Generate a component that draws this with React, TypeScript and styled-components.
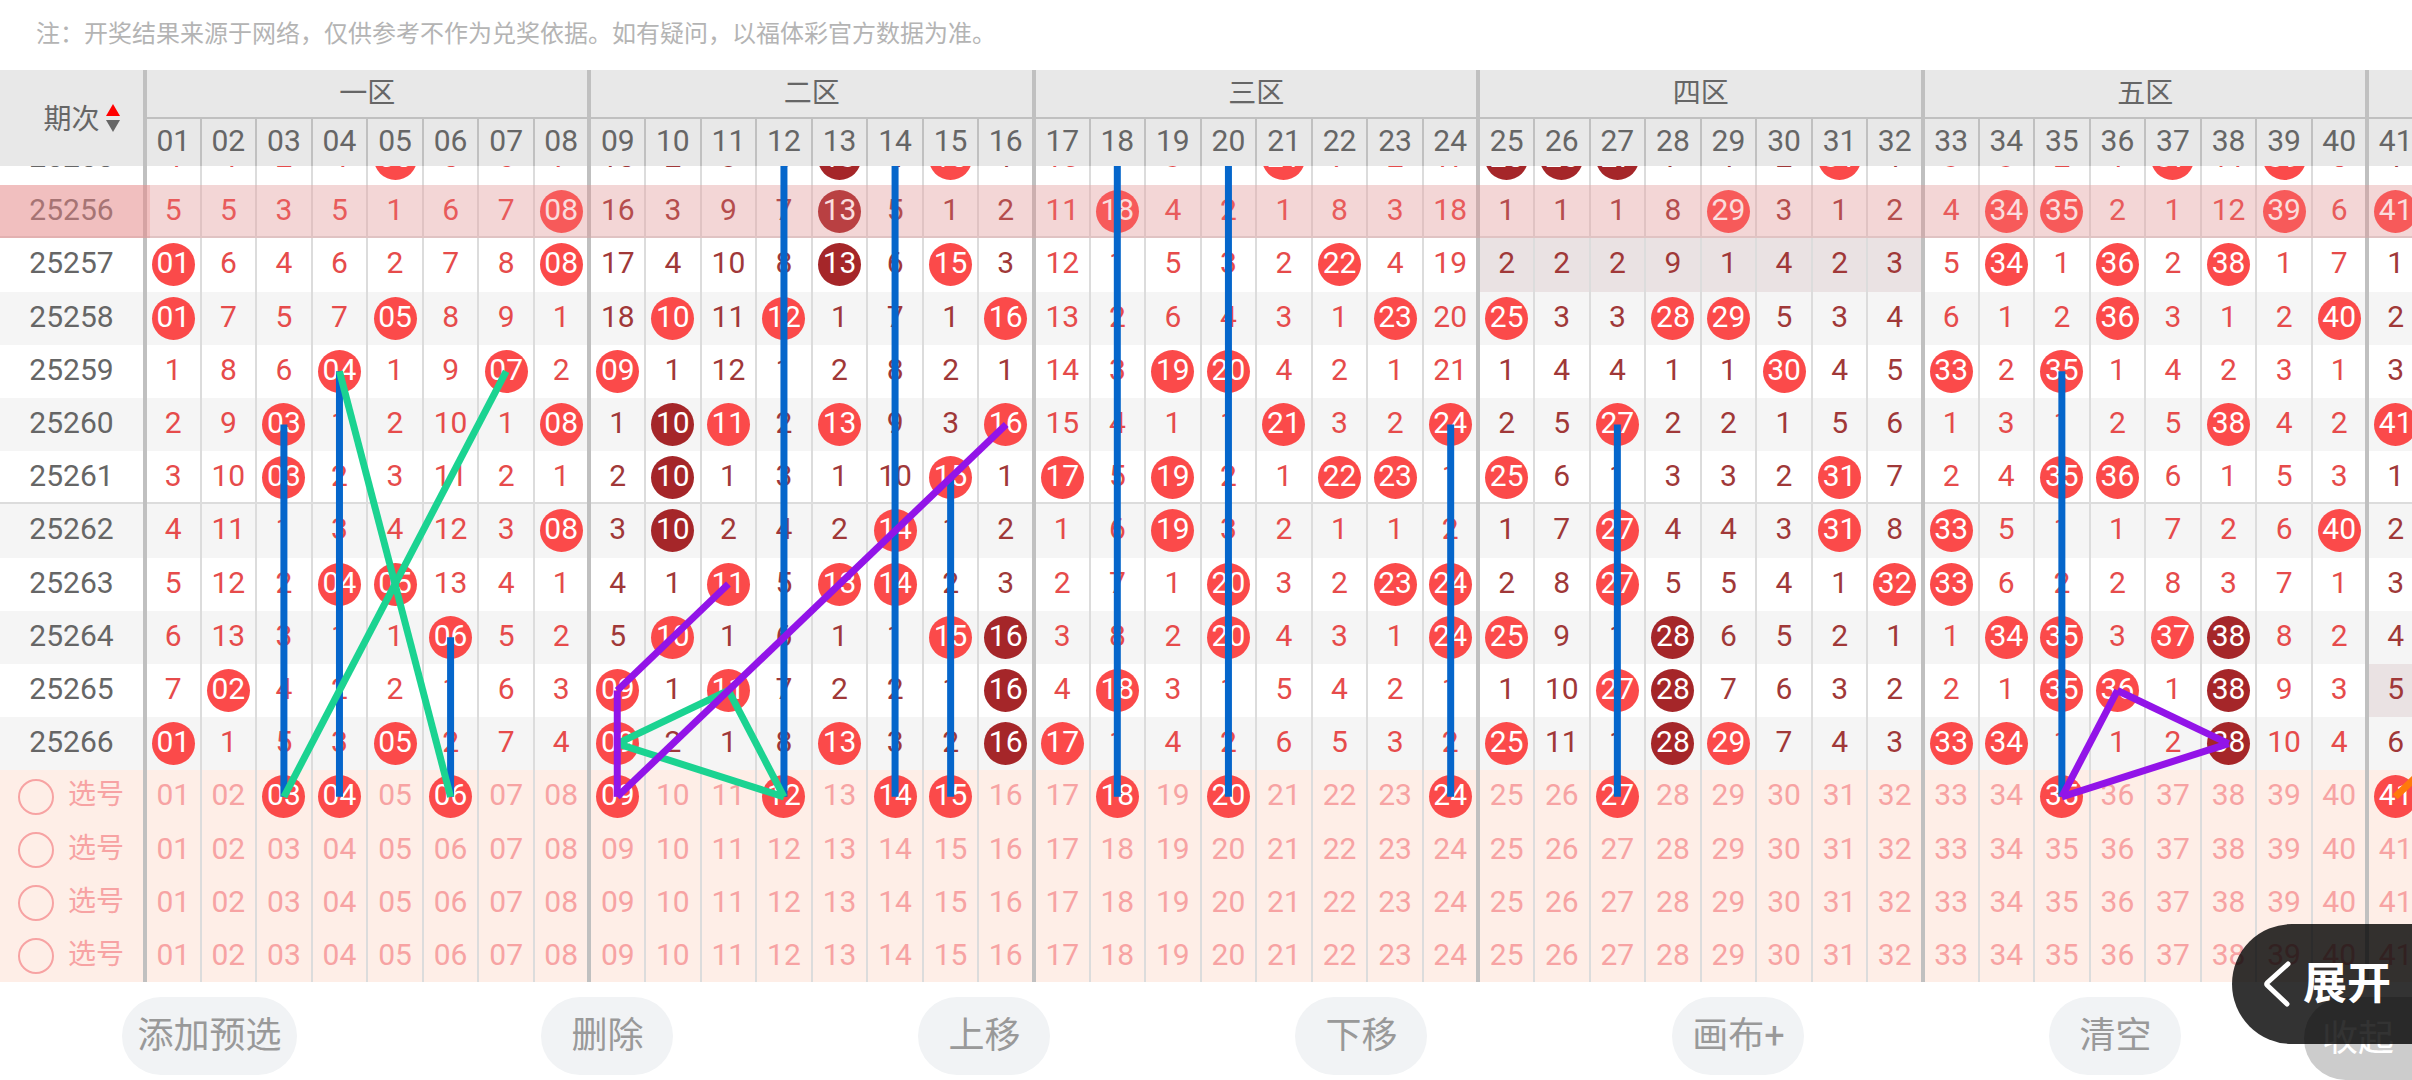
import React, { useState } from "react";
import styled, { createGlobalStyle, css } from "styled-components";

const COLUMNS = 41;
const ZONE_SIZE = 8;
const ZONES = ["一区", "二区", "三区", "四区", "五区", ""];
const NUMBERS = Array.from({ length: COLUMNS }, (_, i) => i + 1);

/* "*" is a drawn number, "#" a number drawn in consecutive issues, anything else the gap count */
const ISSUES: { id: string; cells: string }[] = [
  { id: "25255", cells: "4 4 2 4 * 5 6 7 15 2 8 6 # 4 * 1 10 1 3 1 * 7 2 17 # # # 7 1 2 * 1 3 3 2 1 * 11 * 5 1" },
  { id: "25256", cells: "5 5 3 5 1 6 7 * 16 3 9 7 # 5 1 2 11 * 4 2 1 8 3 18 1 1 1 8 * 3 1 2 4 * * 2 1 12 * 6 *" },
  { id: "25257", cells: "* 6 4 6 2 7 8 * 17 4 10 8 # 6 * 3 12 1 5 3 2 * 4 19 2 2 2 9 1 4 2 3 5 * 1 * 2 * 1 7 1" },
  { id: "25258", cells: "* 7 5 7 * 8 9 1 18 * 11 * 1 7 1 * 13 2 6 4 3 1 * 20 * 3 3 * * 5 3 4 6 1 2 * 3 1 2 * 2" },
  { id: "25259", cells: "1 8 6 * 1 9 * 2 * 1 12 1 2 8 2 1 14 3 * * 4 2 1 21 1 4 4 1 1 * 4 5 * 2 * 1 4 2 3 1 3" },
  { id: "25260", cells: "2 9 * 1 2 10 1 * 1 # * 2 * 9 3 * 15 4 1 1 * 3 2 * 2 5 * 2 2 1 5 6 1 3 1 2 5 * 4 2 *" },
  { id: "25261", cells: "3 10 * 2 3 11 2 1 2 # 1 3 1 10 * 1 * 5 * 2 1 * * 1 * 6 1 3 3 2 * 7 2 4 * * 6 1 5 3 1" },
  { id: "25262", cells: "4 11 1 3 4 12 3 * 3 # 2 4 2 * 1 2 1 6 * 3 2 1 1 2 1 7 * 4 4 3 * 8 * 5 1 1 7 2 6 * 2" },
  { id: "25263", cells: "5 12 2 * * 13 4 1 4 1 * 5 * * 2 3 2 7 1 * 3 2 * * 2 8 * 5 5 4 1 * * 6 2 2 8 3 7 1 3" },
  { id: "25264", cells: "6 13 3 1 1 * 5 2 5 * 1 6 1 1 * # 3 8 2 * 4 3 1 * * 9 1 # 6 5 2 1 1 * * 3 * # 8 2 4" },
  { id: "25265", cells: "7 * 4 2 2 1 6 3 * 1 * 7 2 2 1 # 4 * 3 1 5 4 2 1 1 10 * # 7 6 3 2 2 1 * * 1 # 9 3 5" },
  { id: "25266", cells: "* 1 5 3 * 2 7 4 * 2 1 8 * 3 2 # * 1 4 2 6 5 3 2 * 11 1 # * 7 4 3 * * 1 1 2 # 10 4 6" },
];

const MARKED_ISSUE = "25256";
const DIVIDED_AFTER = ["25256", "25261"];
/* zones without a single drawn number in that issue */
const EMPTY_ZONES: Record<string, number> = { "25257": 3, "25265": 5 };

const FIRST_PICKS = [3, 4, 6, 9, 12, 14, 15, 18, 20, 24, 27, 35, 41];

/* [from number, from row, to number, to row] */
type Segment = [number, number, number, number];
const STROKES: { color: string; segments: Segment[] }[] = [
  {
    color: "#0566cb",
    segments: [
      [3, 5, 3, 12],
      [4, 4, 4, 12],
      [6, 9, 6, 12],
      [12, 0, 12, 12],
      [14, 0, 14, 12],
      [15, 6, 15, 12],
      [18, 0, 18, 12],
      [20, 0, 20, 12],
      [24, 5, 24, 12],
      [27, 5, 27, 12],
      [35, 4, 35, 12],
    ],
  },
  {
    color: "#1bd391",
    segments: [
      [7, 4, 3, 12],
      [4, 4, 6, 12],
      [11, 10, 9, 11],
      [9, 11, 12, 12],
      [12, 12, 11, 10],
    ],
  },
  {
    color: "#9214e8",
    segments: [
      [16, 5, 9, 12],
      [11, 8, 9, 10],
      [9, 10, 9, 12],
      [36, 10, 38, 11],
      [38, 11, 35, 12],
      [35, 12, 36, 10],
    ],
  },
  { color: "#ff7a0a", segments: [[41, 12, 42, 11]] },
];

const pad = (n: number) => String(n).padStart(2, "0");
const zoneOf = (n: number) => Math.floor((n - 1) / ZONE_SIZE);

const GlobalStyle = createGlobalStyle`
  *, *::before, *::after { box-sizing: border-box; }
  body {
    margin: 0;
    background: #fff;
    font-family: Roboto, "Noto Sans CJK SC", sans-serif;
  }
  button { font-family: inherit; border: 0; cursor: pointer; }
`;

const Page = styled.main`
  position: relative;
  display: flex;
  flex-direction: column;
  height: 100vh;
  overflow: hidden;
`;

const Note = styled.p`
  flex: none;
  margin: 0;
  padding: 0 36px;
  font-family: "Noto Sans CJK SC", sans-serif;
  font-size: 24px;
  line-height: 64px;
  height: 70px;
  color: #b4b4b4;
`;

const Chart = styled.section`
  position: relative;
  flex: 1;
  min-height: 0;
  overflow: hidden;
`;

const Table = styled.table`
  display: block;
  width: calc(100% + 11px);
`;

const columns = css`
  display: grid;
  grid-template-columns: 145px repeat(${COLUMNS}, minmax(0, 1fr));
`;

const Head = styled.thead`
  ${columns}
  grid-template-rows: 49px 47px;
  position: relative;
  z-index: 2;
  background: #e8e8e8;
  color: #666;
`;

const HeadRow = styled.tr`
  display: contents;
`;

const Corner = styled.th`
  grid-row: 1 / 3;
  display: flex;
  align-items: center;
  justify-content: center;
  gap: 6px;
  padding: 0 0 0 20px;
  border-right: 2px solid #c0c0c0;
  font-size: 28px;
  font-weight: 400;
`;

const CornerText = styled.span`
  padding-bottom: 3px;
`;

const SortIcon = styled.svg`
  width: 14px;
  height: 28px;
`;

const ZoneCell = styled.th<{ $span: number }>`
  grid-column: span ${(p) => p.$span};
  display: flex;
  align-items: center;
  justify-content: center;
  padding: 0;
  border: 2px solid #c0c0c0;
  border-top: 0;
  font-size: 28px;
  line-height: 40px;
  font-weight: 400;
`;

const edges = css<{ $number: number }>`
  border-style: solid;
  border-width: 0 1px;
  border-color: #dcdcdc;
  ${(p) => p.$number % ZONE_SIZE === 1 && "border-left: 2px solid #c0c0c0;"}
  ${(p) => p.$number % ZONE_SIZE === 0 && "border-right: 2px solid #c0c0c0;"}
`;

const numeral = css`
  display: flex;
  align-items: center;
  justify-content: center;
  font-size: 30px;
  line-height: 36px;
  font-weight: 400;
`;

const NumberHead = styled.th<{ $number: number }>`
  ${numeral}
  ${edges}
  border-color: #c0c0c0;
  padding: 0 0 3px;
`;

const Body = styled.tbody`
  display: grid;
  grid-auto-rows: minmax(0, 1fr);
  height: 851px;
  margin-top: -34px;
`;

const Row = styled.tr<{ $kind: "plain" | "striped" | "pick"; $divided?: boolean; $marked?: boolean }>`
  ${columns}
  position: relative;
  background: ${(p) => ({ plain: "#fff", striped: "#f5f5f5", pick: "#feeee7" })[p.$kind]};
  ${(p) => p.$divided && "box-shadow: inset 0 -2px #dcdcdc;"}
  ${(p) =>
    p.$marked &&
    css`
      &::after,
      th::after {
        content: "";
        position: absolute;
        inset: 0;
        background: rgba(238, 134, 134, 0.28);
      }
      th::after {
        right: -7px;
      }
    `}
`;

const IssueCell = styled.th`
  ${numeral}
  position: relative;
  padding: 0 0 3px;
  border-right: 2px solid #c0c0c0;
  color: #666;
`;

const PickHead = styled.th`
  display: flex;
  align-items: center;
  padding: 0 0 0 18px;
  border-right: 2px solid #c0c0c0;
  font-weight: 400;
`;

const PickLabel = styled.label`
  display: flex;
  align-items: center;
  gap: 14px;
  font-size: 28px;
  line-height: 36px;
  color: #f7a3a3;
`;

const Radio = styled.input`
  appearance: none;
  width: 36px;
  height: 36px;
  margin: 0;
  border: 2px solid #f7a3a3;
  border-radius: 50%;
  &:checked {
    background: #f7a3a3;
  }
`;

const PickText = styled.span`
  padding-bottom: 3px;
`;

const Cell = styled.td<{ $number: number; $missed?: boolean }>`
  ${numeral}
  ${edges}
  padding: 0;
  color: ${(p) => (zoneOf(p.$number) % 2 ? "#a03838" : "#e64b4b")};
  ${(p) => p.$missed && "background: #eae2e3;"}
`;

const Gap = styled.span`
  padding-bottom: 3px;
`;

const ball = css`
  display: flex;
  flex: none;
  align-items: center;
  justify-content: center;
  width: 43px;
  height: 43px;
  padding: 0 0 3px;
  border-radius: 50%;
  color: #fff;
`;

const Ball = styled.span<{ $repeat: boolean }>`
  ${ball}
  background: ${(p) => (p.$repeat ? "#a52629" : "#fb4a4a")};
`;

const PickButton = styled.button<{ $on: boolean }>`
  ${ball}
  font-size: 30px;
  line-height: 36px;
  background: ${(p) => (p.$on ? "#fb4a4a" : "transparent")};
  color: ${(p) => (p.$on ? "#fff" : "#f7a3a3")};
`;

/* covers the table body: same top, height and column span */
const Drawing = styled.svg`
  position: absolute;
  z-index: 1;
  top: 62px;
  left: 145px;
  width: calc(100% + 11px - 145px);
  height: 851px;
  pointer-events: none;
`;

const Toolbar = styled.footer`
  flex: none;
  display: flex;
  align-items: flex-start;
  height: 98px;
  padding-top: 15px;
`;

const Actions = styled.div`
  flex: 1;
  display: flex;
  justify-content: space-around;
`;

const ActionButton = styled.button`
  height: 78px;
  min-width: 132px;
  padding: 0 15px 1px;
  border-radius: 39px;
  background: #f1f3f5;
  color: #999;
  font-size: 36px;
  line-height: 48px;
`;

const CollapseButton = styled.button`
  width: 108px;
  height: 83px;
  padding: 0;
  border-radius: 42px 0 0 42px;
  background: #ccc;
  color: #fff;
  font-size: 36px;
  line-height: 48px;
`;

const ExpandButton = styled.button`
  position: absolute;
  z-index: 3;
  right: 0;
  bottom: 36px;
  display: flex;
  align-items: center;
  gap: 12px;
  width: 180px;
  height: 120px;
  padding: 0 0 0 31px;
  border-radius: 60px 0 0 60px;
  background: rgba(0, 0, 0, 0.8);
  color: #fff;
  font-size: 44px;
  line-height: 60px;
  font-weight: 700;
`;

const Chevron = styled.svg`
  flex: none;
  width: 28px;
  height: 48px;
`;

function IssueRow({ id, cells, index }: { id: string; cells: string; index: number }) {
  return (
    <Row
      $kind={index % 2 ? "striped" : "plain"}
      $divided={DIVIDED_AFTER.includes(id)}
      $marked={id === MARKED_ISSUE}
    >
      <IssueCell scope="row">{id}</IssueCell>
      {cells.split(" ").map((value, i) => (
        <Cell key={i} $number={i + 1} $missed={EMPTY_ZONES[id] === zoneOf(i + 1)}>
          {value === "*" || value === "#" ? (
            <Ball $repeat={value === "#"}>{pad(i + 1)}</Ball>
          ) : (
            <Gap>{value}</Gap>
          )}
        </Cell>
      ))}
    </Row>
  );
}

function PickRow({ row, initial }: { row: number; initial: number[] }) {
  const [picks, setPicks] = useState(initial);
  const toggle = (n: number) =>
    setPicks((old) => (old.includes(n) ? old.filter((p) => p !== n) : [...old, n]));
  return (
    <Row $kind="pick">
      <PickHead scope="row">
        <PickLabel htmlFor={`pick-${row}`}>
          <Radio type="radio" name="pick" id={`pick-${row}`} />
          <PickText>选号</PickText>
        </PickLabel>
      </PickHead>
      {NUMBERS.map((n) => (
        <Cell key={n} $number={n}>
          <PickButton type="button" $on={picks.includes(n)} onClick={() => toggle(n)}>
            {pad(n)}
          </PickButton>
        </Cell>
      ))}
    </Row>
  );
}

export default function App() {
  return (
    <Page>
      <GlobalStyle />
      <Note>注：开奖结果来源于网络，仅供参考不作为兑奖依据。如有疑问，以福体彩官方数据为准。</Note>
      <Chart>
        <Table>
          <Head>
            <HeadRow>
              <Corner rowSpan={2} scope="col">
                <CornerText>期次</CornerText>
                <SortIcon viewBox="0 0 14 28" aria-hidden="true">
                  <path d="M7 0 14 12H0z" fill="#f00" />
                  <path d="M0 16h14L7 28z" fill="#666" />
                </SortIcon>
              </Corner>
              {ZONES.map((name, i) => {
                const span = Math.min(ZONE_SIZE, COLUMNS - i * ZONE_SIZE);
                return (
                  <ZoneCell key={i} $span={span} colSpan={span} scope="colgroup">
                    {name}
                  </ZoneCell>
                );
              })}
            </HeadRow>
            <HeadRow>
              {NUMBERS.map((n) => (
                <NumberHead key={n} $number={n} scope="col">
                  {pad(n)}
                </NumberHead>
              ))}
            </HeadRow>
          </Head>
          <Body>
            {ISSUES.map((issue, i) => (
              <IssueRow key={issue.id} index={i} {...issue} />
            ))}
            {[0, 1, 2, 3].map((row) => (
              <PickRow key={row} row={row} initial={row === 0 ? FIRST_PICKS : []} />
            ))}
          </Body>
        </Table>
        <Drawing viewBox="0 0 41 16" preserveAspectRatio="none" aria-hidden="true">
          {STROKES.map(({ color, segments }) => (
            <g key={color} stroke={color} strokeWidth="7">
              {segments.map(([n1, r1, n2, r2], i) => (
                <line
                  key={i}
                  x1={n1 - 0.5}
                  y1={r1 + 0.5}
                  x2={n2 - 0.5}
                  y2={r2 + 0.5}
                  vectorEffect="non-scaling-stroke"
                />
              ))}
            </g>
          ))}
        </Drawing>
      </Chart>
      <Toolbar>
        <Actions>
          {["添加预选", "删除", "上移", "下移", "画布+", "清空"].map((text) => (
            <ActionButton key={text} type="button">
              {text}
            </ActionButton>
          ))}
        </Actions>
        <CollapseButton type="button">收起</CollapseButton>
      </Toolbar>
      <ExpandButton type="button">
        <Chevron viewBox="0 0 28 48" fill="none" aria-hidden="true">
          <path
            d="M25 4 4.500 22.500Q3 24 4.500 25.500L24 44"
            stroke="#fff"
            strokeWidth="5"
            strokeLinecap="round"
            strokeLinejoin="round"
          />
        </Chevron>
        展开
      </ExpandButton>
    </Page>
  );
}
